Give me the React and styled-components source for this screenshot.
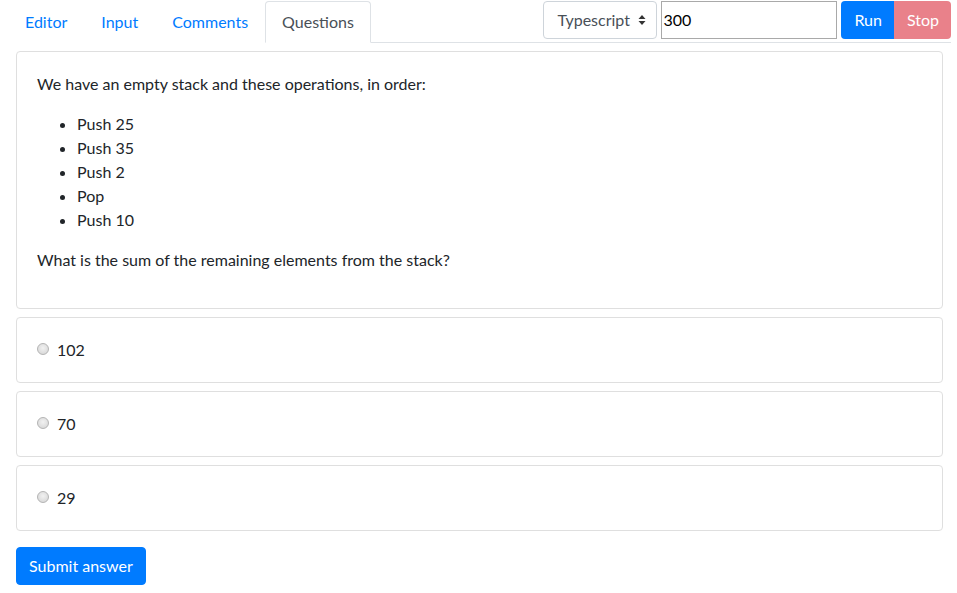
import React from "react";
import styled, { createGlobalStyle } from "styled-components";

const Global = createGlobalStyle`
  html, body { margin: 0; padding: 0; background: #fff; }
  body {
    font-family: Lato, "Noto Sans", sans-serif;
    font-size: 16px;
    line-height: 1.5;
    color: #212529;
  }
  * { box-sizing: border-box; }
`;

const Page = styled.div`
  padding: 1px 6px 0 8px;
`;

const TopBar = styled.div`
  display: flex;
  align-items: flex-start;
  justify-content: space-between;
  border-bottom: 1px solid #dee2e6;
  height: 42px;
`;

const Tabs = styled.ul`
  display: flex;
  list-style: none;
  margin: 0;
  padding: 0;
`;

const Tab = styled.li`
  padding: 8px 16px;
  height: 42px;
  border: 1px solid ${(p) => (p.$active ? "#dee2e6" : "transparent")};
  border-bottom-color: ${(p) => (p.$active ? "#fff" : "transparent")};
  border-top-left-radius: 4px;
  border-top-right-radius: 4px;
  background: #fff;
  color: ${(p) => (p.$active ? "#495057" : "#007bff")};
  line-height: 24px;
  cursor: pointer;
  position: relative;
  z-index: 1;
`;

const Controls = styled.div`
  display: flex;
  align-items: center;
  gap: 4px;
`;

const SelectBox = styled.div`
  width: 114px;
  height: 38px;
  border: 1px solid #ced4da;
  border-radius: 4px;
  display: flex;
  align-items: center;
  justify-content: space-between;
  padding: 0 10px 0 13px;
  color: #495057;
`;

const NumInput = styled.div`
  width: 176px;
  height: 38px;
  border: 1px solid #a9a9a9;
  display: flex;
  align-items: center;
  padding-left: 1px;
  color: #000;
`;

const BtnGroup = styled.div`
  display: flex;
`;

const Btn = styled.div`
  height: 38px;
  padding: 0 12px 0 13px;
  display: flex;
  align-items: center;
  color: #fff;
  background: ${(p) => (p.$danger ? "#e9818a" : "#007bff")};
  border-radius: ${(p) => (p.$danger ? "0 4px 4px 0" : "4px 0 0 4px")};
`;

const Content = styled.div`
  padding: 8px 8px 0 8px;
`;

const Card = styled.div`
  border: 1px solid #dfdfdf;
  border-radius: 4px;
  padding: 20px;
  margin-bottom: 8px;
  min-height: ${(p) => (p.$answer ? "66px" : "auto")};
`;

const P = styled.p`
  margin: 0 0 16px 0;
`;

const List = styled.ul`
  margin: 0 0 16px 0;
  padding-left: 40px;
`;

const Option = styled.label`
  display: flex;
  align-items: center;
  gap: 8px;
  line-height: 24px;
`;

const Radio = styled.span`
  width: 12px;
  height: 12px;
  border-radius: 50%;
  border: 1px solid #b4b4b4;
  background: radial-gradient(circle at 50% 40%, #f1f1f1 0%, #dcdcdc 70%, #cfcfcf 100%);
  margin-top: -2px;
`;

const Submit = styled.button`
  margin-top: 8px;
  font: inherit;
  color: #fff;
  background: #007bff;
  border: 1px solid #007bff;
  border-radius: 4px;
  padding: 6px 12px;
  line-height: 24px;
`;

const Caret = () => (
  <svg width="8" height="12" viewBox="0 0 8 12">
    <path d="M4 1 L7.5 5 L0.5 5 Z M4 11 L7.5 7 L0.5 7 Z" fill="#333" />
  </svg>
);

export default function App() {
  const answers = ["102", "70", "29"];
  return (
    <Page>
      <Global />
      <TopBar>
        <Tabs>
          <Tab>Editor</Tab>
          <Tab>Input</Tab>
          <Tab>Comments</Tab>
          <Tab $active>Questions</Tab>
        </Tabs>
        <Controls>
          <SelectBox>
            <span>Typescript</span>
            <Caret />
          </SelectBox>
          <NumInput>300</NumInput>
          <BtnGroup>
            <Btn>Run</Btn>
            <Btn $danger>Stop</Btn>
          </BtnGroup>
        </Controls>
      </TopBar>
      <Content>
        <Card>
          <P>We have an empty stack and these operations, in order:</P>
          <List>
            <li>Push 25</li>
            <li>Push 35</li>
            <li>Push 2</li>
            <li>Pop</li>
            <li>Push 10</li>
          </List>
          <P>What is the sum of the remaining elements from the stack?</P>
        </Card>
        {answers.map((a) => (
          <Card $answer key={a}>
            <Option>
              <Radio />
              {a}
            </Option>
          </Card>
        ))}
        <Submit>Submit answer</Submit>
      </Content>
    </Page>
  );
}
